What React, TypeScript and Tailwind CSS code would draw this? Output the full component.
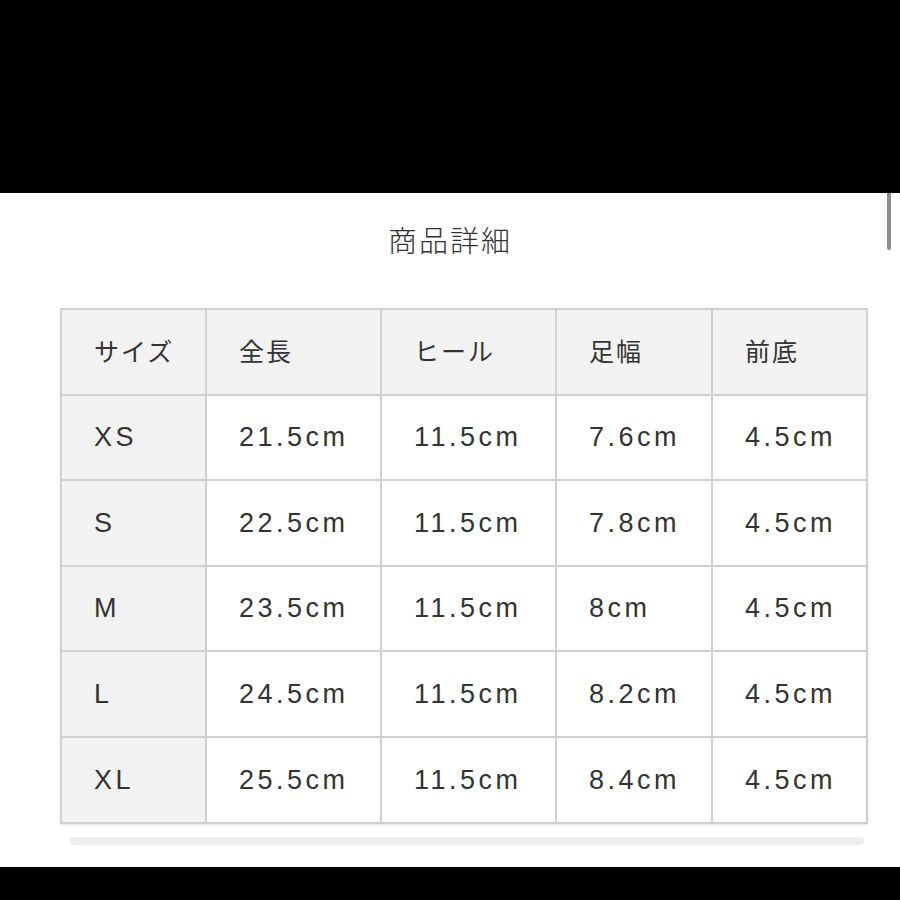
import React from "react";

const headers = ["サイズ", "全長", "ヒール", "足幅", "前底"];
const rows = [
  ["XS", "21.5cm", "11.5cm", "7.6cm", "4.5cm"],
  ["S", "22.5cm", "11.5cm", "7.8cm", "4.5cm"],
  ["M", "23.5cm", "11.5cm", "8cm", "4.5cm"],
  ["L", "24.5cm", "11.5cm", "8.2cm", "4.5cm"],
  ["XL", "25.5cm", "11.5cm", "8.4cm", "4.5cm"],
];
const widths = ["w-[145px]", "w-[175px]", "w-[175px]", "w-[156px]", "w-[155px]"];

export default function App() {
  return (
    <div
      className="h-[900px] w-[900px] flex flex-col bg-black"
      style={{ fontFamily: '"Noto Sans CJK JP", "Noto Sans", sans-serif' }}
    >
      <div className="h-[193px] bg-black" />
      <main className="relative flex-1 bg-white">
        <div className="absolute right-[9px] top-0 h-[57px] w-[4px] rounded-b-full bg-[#8c8c8c]" />
        <h1 className="pt-[26px] text-center text-[29px] leading-[40px] font-light tracking-[2px] text-[#333]">
          商品詳細
        </h1>
        <div className="mt-[49px] ml-[60px] w-[808px]">
          <table className="border-collapse border-2 border-[#d0d0d0] shadow-[0_1px_2px_rgba(0,0,0,0.12)]">
            <colgroup>
              {widths.map((w, i) => (
                <col key={i} className={w} />
              ))}
            </colgroup>
            <thead>
              <tr className="h-[85.6px] bg-[#f2f2f2]">
                {headers.map((h) => (
                  <th
                    key={h}
                    className="border-2 border-[#d0d0d0] pl-[32px] pb-[2px] text-left align-middle text-[25px] font-normal tracking-[2px] text-[#333]"
                  >
                    {h}
                  </th>
                ))}
              </tr>
            </thead>
            <tbody>
              {rows.map((r) => (
                <tr key={r[0]} className="h-[85.6px]">
                  {r.map((c, i) => (
                    <td
                      key={i}
                      className={`border-2 border-[#d0d0d0] pl-[32px] text-left align-middle text-[27px] tracking-[3.5px] text-[#333] ${
                        i === 0 ? "bg-[#f2f2f2]" : "bg-white"
                      }`}
                      style={{ fontFamily: '"Liberation Sans", "Noto Sans CJK JP", sans-serif' }}
                    >
                      {c}
                    </td>
                  ))}
                </tr>
              ))}
            </tbody>
          </table>
          <div className="mt-[13px] ml-[10px] h-[8px] w-[794px] rounded-full bg-[#efefef]" />
        </div>
      </main>
      <div className="h-[33px] bg-black" />
    </div>
  );
}
